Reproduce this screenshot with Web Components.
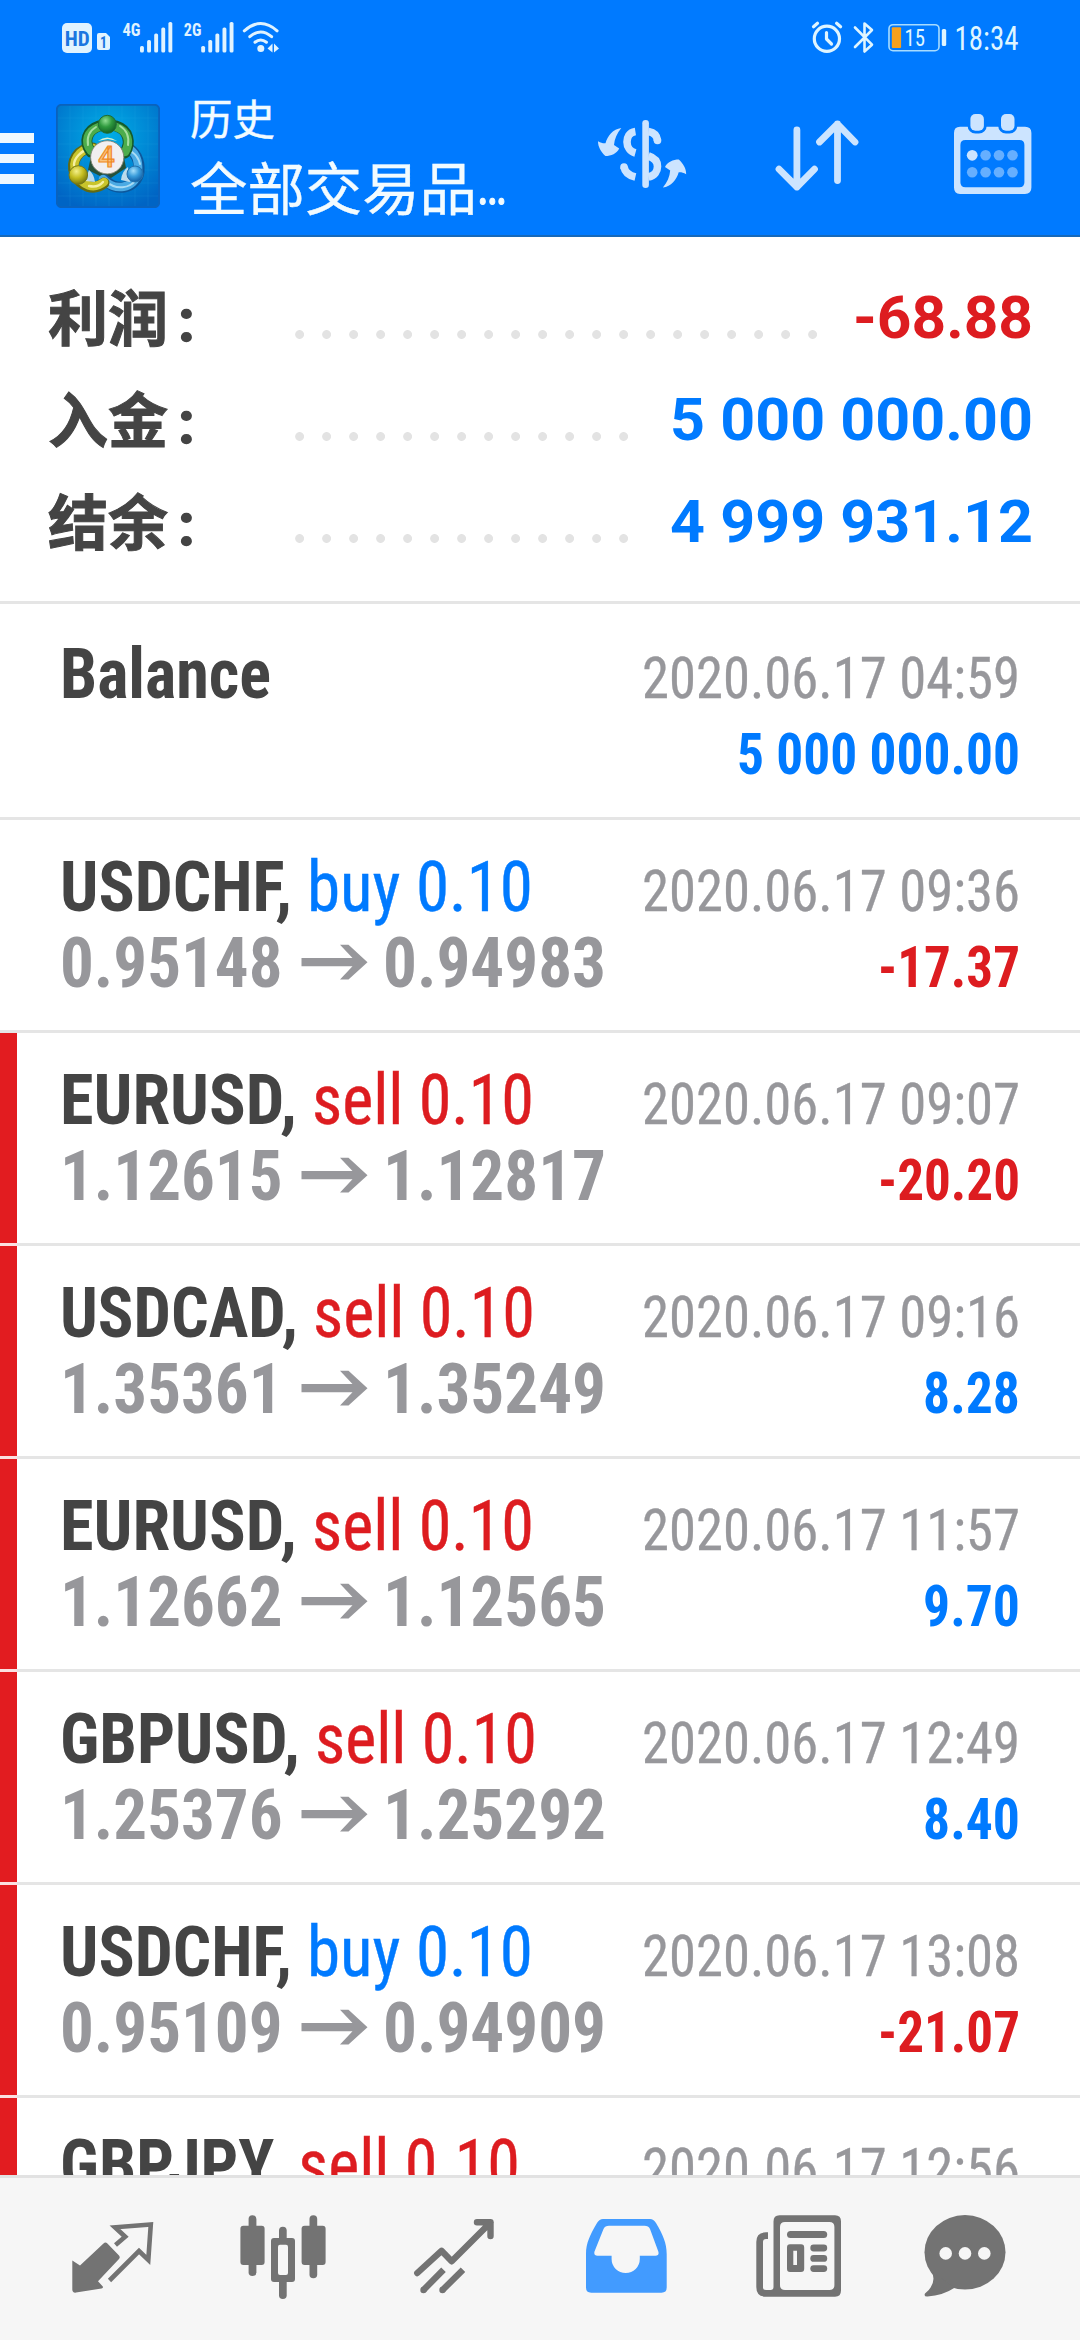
<!DOCTYPE html>
<html lang="zh-CN">
<head>
<meta charset="utf-8">
<title>历史</title>
<style>
html,body{margin:0;padding:0;width:1080px;height:2340px;overflow:hidden;background:#fff}
body{font-family:"Roboto Condensed",Roboto,"Noto Sans CJK SC",sans-serif;color:#444}
</style>
</head>
<body>
<trade-app></trade-app>
<script>
// Single-line text squeezed horizontally to the width given in "w".
class FitText extends HTMLElement{
  connectedCallback(){
    const w=+this.getAttribute('w');
    const r=this.attachShadow({mode:'open'});
    r.innerHTML=`<style>:host{display:block;flex:none;width:${w}px;white-space:pre}
      span{display:inline-block;transform-origin:0 0}</style><span></span>`;
    const s=r.querySelector('span');
    s.textContent=this.getAttribute('text');
    const n=s.getBoundingClientRect().width;
    if(n)s.style.transform=`scaleX(${w/n})`;
  }
}
customElements.define('fit-text',FitText);

class StatusBar extends HTMLElement{
  connectedCallback(){
    const bars=x=>[46,40,33.5,27.5,22].map((y,i)=>`<rect x="${x+i*7.1}" y="${y}" width="3.9" height="${52.6-y}" rx="1.6"/>`).join('');
    this.attachShadow({mode:'open'}).innerHTML=`<style>
    :host{display:flex;justify-content:space-between;height:76px}
    svg{display:block}text{font-family:"Roboto Condensed",Roboto,sans-serif}</style>
    <svg width="300" height="76" fill="#e0f3ff">
      <rect x="62" y="23" width="30" height="30" rx="5"/>
      <text x="64.800" y="45.500" font-size="21" font-weight="700" fill="#1b76e0" textLength="25" lengthAdjust="spacingAndGlyphs">HD</text>
      <path d="M99 33h7l4 4v11q0 2-2 2h-9q-2 0-2-2V35q0-2 2-2z"/>
      <text x="100" y="48" font-size="17" font-weight="700" fill="#1b76e0" textLength="7" lengthAdjust="spacingAndGlyphs">1</text>
      <text x="122.5" y="35.6" font-size="19" font-weight="700" textLength="18" lengthAdjust="spacingAndGlyphs">4G</text>
      ${bars(140)}
      <text x="183.8" y="35.6" font-size="19" font-weight="700" textLength="17.6" lengthAdjust="spacingAndGlyphs">2G</text>
      ${bars(201.2)}
      <g fill="none" stroke="#e0f3ff" stroke-width="3" stroke-linecap="round"><path d="M244.3 30.8q16.400-14.500 32.800 0M249.800 36.700q11-9.500 21.800 0M255 42.200q5.700-4.500 11.400 0"/></g>
      <circle cx="260.800" cy="48.600" r="3.500"/>
      <path d="M272.500 43.500v9l-5-4zM274 43.500l5 5-5 4z"/>
    </svg>
    <svg width="280" height="76" viewBox="800 0 280 76" fill="#dff5ff">
      <g fill="none" stroke="#dff5ff" stroke-width="3.200" stroke-linecap="round" stroke-linejoin="round">
      <circle cx="826.900" cy="38.700" r="12.600"/><path d="M826.500 32.500v6.500l5 5M813.500 26.800l4-3.500M840.600 26.800l-4-3.500"/>
      <path stroke-width="2.600" d="M855 27.500L872 44.700 864.500 51.500V23.500L872 30 855 47"/></g>
      <rect x="889" y="24.700" width="50" height="26" rx="4" fill="none" stroke="#a8dcff" stroke-width="1.600"/>
      <rect x="891.800" y="27.300" width="9.300" height="20.700" rx="1" fill="#f7a01d"/>
      <text x="904.500" y="46" font-size="24.500" textLength="20.500" lengthAdjust="spacingAndGlyphs">15</text>
      <rect x="941.800" y="29" width="4.400" height="17" rx="1.500"/>
      <text x="954.500" y="50" font-size="33.500" textLength="64" lengthAdjust="spacingAndGlyphs">18:34</text>
    </svg>`;
  }
}
customElements.define('status-bar',StatusBar);

class AppLogo extends HTMLElement{
  connectedCallback(){
    this.attachShadow({mode:'open'}).innerHTML=`<style>:host{display:block;width:104px;height:104px}svg{display:block}</style>
    <svg width="104" height="104">
    <defs>
      <radialGradient id="b" cx=".5" cy=".3" r=".75"><stop offset="0" stop-color="#00aee6"/><stop offset=".5" stop-color="#008ad6"/><stop offset="1" stop-color="#0064c4"/></radialGradient>
      <radialGradient id="g" cx=".4" cy=".3" r=".7"><stop offset="0" stop-color="#8fdd92"/><stop offset=".5" stop-color="#2f9a3e"/><stop offset="1" stop-color="#136326"/></radialGradient>
      <radialGradient id="y" cx=".4" cy=".3" r=".7"><stop offset="0" stop-color="#f4f08a"/><stop offset=".5" stop-color="#c6bf22"/><stop offset="1" stop-color="#78780c"/></radialGradient>
      <radialGradient id="u" cx=".4" cy=".3" r=".7"><stop offset="0" stop-color="#a5defa"/><stop offset=".5" stop-color="#3a9ddb"/><stop offset="1" stop-color="#115fa5"/></radialGradient>
    </defs>
    <rect x=".8" y=".8" width="102.400" height="102.400" rx="5" fill="url(#b)" stroke="#0a62bd" stroke-width="2"/>
    <path d="M14 2v100M27 2v100M40 2v100M53 2v100M66 2v100M79 2v100M92 2v100M2 14h100M2 27h100M2 40h100M2 53h100M2 66h100M2 79h100M2 92h100" stroke="#3bb4f0" stroke-opacity=".12"/>
    <path d="M36 48L51 40 67 48 70 64 52 76 32 66z" fill="#24513a"/>
    <g fill="none" stroke-linecap="round">
      <path d="M49 76C60 88 80 85 83 68 84 56 79 47 71 44" stroke="#0d579b" stroke-width="11"/>
      <path d="M47 75C58 88 79 85 82 68 83 56 79 47 71 44" stroke="#4aaae4" stroke-width="8.500"/>
      <path d="M50 77C60 87 74 84 80 76M84 60Q82 52 76 48" stroke="#a9dcf5" stroke-width="2"/>
      <path d="M37 44C22 44 14 58 19 70 25 83 38 87 48 79" stroke="#626a12" stroke-width="11"/>
      <path d="M37 44C22 45 15 58 20 69 26 82 38 86 48 78" stroke="#c9c42b" stroke-width="8.500"/>
      <path d="M34 44C25 47 18 54 18 61M33 82Q42 84 47 78" stroke="#f5f0a2" stroke-width="2.400"/>
      <path d="M35 48C27 38 31 26 43 22M60 22C73 26 75 39 69 49" stroke="#155b2b" stroke-width="11"/>
      <path d="M35 47C28 38 31 27 43 23M60 23C72 27 75 38 69 48" stroke="#4cac4c" stroke-width="8.500"/>
      <path d="M32 41Q30 29 40 23M64 22Q74 28 72 41" stroke="#a6dfa0" stroke-width="2"/>
    </g>
    <path d="M42 37q9-7 19 0l-9-2z" fill="#d4f0d2"/>
    <path d="M33 66q5 4 6 12l-10-1zM72 63q-6 4-7 13l9 2z" fill="#dceaf0" opacity=".85"/>
    <circle cx="51.300" cy="20.300" r="9" fill="url(#g)" stroke="#206b36" stroke-width="1"/>
    <circle cx="22.300" cy="71" r="9.300" fill="url(#y)" stroke="#75781a" stroke-width="1"/>
    <circle cx="79" cy="70" r="8" fill="url(#u)" stroke="#2472ae" stroke-width="1"/>
    <circle cx="51.200" cy="53.300" r="16.600" fill="#f1eff0" stroke="#7d8270" stroke-width=".9"/>
    <text x="50.500" y="63.200" text-anchor="middle" font-family="Roboto,sans-serif" font-weight="500" font-size="29" fill="#f9c47e" stroke="#f08a24" stroke-width="1.200">4</text>
    </svg>`;
  }
}
customElements.define('app-logo',AppLogo);

class ToolBar extends HTMLElement{
  connectedCallback(){
    this.attachShadow({mode:'open'}).innerHTML=`<style>
    :host{display:flex;height:159px;color:#f2fbff}
    svg{display:block;flex:none}
    .menu{width:34px;display:flex;flex-direction:column;gap:11px;padding-top:57px;margin-right:22px}
    .menu i{height:9.500px;background:#eef8ff}
    app-logo{margin-top:28px}
    .titles{width:374px;padding-left:30px;padding-top:10px;box-sizing:border-box;font-family:"Noto Sans CJK SC",sans-serif;-webkit-text-stroke:.4px #f2fbff}
    .sub{font-size:42.500px;line-height:62px;height:62px}
    .main{font-size:57px;line-height:74px;display:flex}
    .dots{font-family:Roboto,sans-serif;-webkit-text-stroke:1.200px #f2fbff}
    </style>
    <div class="menu"><i></i><i></i><i></i></div>
    <app-logo></app-logo>
    <div class="titles"><div class="sub"><fit-text w="85" text="历史"></fit-text></div>
      <div class="main"><fit-text w="287" text="全部交易品"></fit-text><fit-text class="dots" w="30" text="…"></fit-text></div></div>
    <svg width="546" height="159" viewBox="534 76 546 159" fill="#cce4ff">
      <rect x="642.300" y="120" width="6.600" height="68" rx="3.300"/>
      <g fill="none" stroke="#cce4ff" stroke-width="7.600">
        <path d="M635.400 131.500C629 132.500 627 137.500 627 142 627 147 630 151.500 635.400 153M648.500 131.500C654 132.500 657 135.500 657.500 140.500M648.500 156C655 158 657.500 162 657.500 166.500S655 175.500 648.500 177M624 167C625 172.500 629 175.500 635.400 177"/></g>
      <circle cx="657.500" cy="140.500" r="3.800"/><circle cx="624" cy="167" r="3.800"/>
      <path d="M621.300 128C617 133 614.500 139 614 145L619.200 148.500C617 153.500 611 156 605.400 156 601 152 598 147 598 141.300 601 143 603 143.500 605.500 143.300 607.500 136 613 129 621.300 128z"/>
      <path transform="rotate(180 642.1 157.8)" d="M621.300 128C617 133 614.500 139 614 145L619.200 148.500C617 153.500 611 156 605.400 156 601 152 598 147 598 141.300 601 143 603 143.500 605.500 143.300 607.500 136 613 129 621.300 128z"/>
      <path fill="none" stroke="#cce4ff" stroke-width="6.800" stroke-linecap="round" stroke-linejoin="round" d="M796.900 130v57M779 169.200L796.900 187 814.500 169.200M837.500 180.500V124M819.500 142L837.500 124 855 142"/>
      <path fill-rule="evenodd" d="M960 126.700h65q6.400 0 6.400 6.400v54.500q0 6.400-6.400 6.400h-65q-6 0-6-6.400v-54.500q0-6.400 6-6.400zM965.400 140q-5 0-5 5v37.300q0 5 5 5h54q5 0 5-5V145q0-5-5-5z"/>
      <g stroke="#007aff" stroke-width="5.600" paint-order="stroke"><rect x="970.400" y="114" width="13.500" height="16.700" rx="5"/><rect x="1001" y="114" width="13.500" height="16.700" rx="5"/></g>
      <circle cx="972.200" cy="155.300" r="5.400"/>
      <g fill="#66afff"><circle cx="985.600" cy="155.300" r="5.300"/><circle cx="999" cy="155.300" r="5.300"/><circle cx="1012.500" cy="155.300" r="5.300"/>
      <circle cx="972.200" cy="172.300" r="5.300"/><circle cx="985.600" cy="172.300" r="5.300"/><circle cx="999" cy="172.300" r="5.300"/><circle cx="1012.500" cy="172.300" r="5.300"/></g>
    </svg>`;
  }
}
customElements.define('tool-bar',ToolBar);

class SummaryLine extends HTMLElement{
  connectedCallback(){
    const g=n=>this.getAttribute(n);
    this.attachShadow({mode:'open'}).innerHTML=`<style>
    :host{display:flex;height:102px;padding:0 47px 0 48px;font-weight:700;font-size:60px;line-height:102px}
    .l{width:120px;font-family:"Noto Sans CJK SC",sans-serif;margin-top:-3px;-webkit-text-stroke:1px #444}
    .c{width:127px;padding-left:10px;box-sizing:border-box;margin-top:3px;font-family:Roboto,sans-serif;-webkit-text-stroke:1.500px #444}
    .d{height:9px;margin-top:62.500px;width:${27*g('dots')}px;background:radial-gradient(circle at 4.600px 4.500px,#e3e3e3 4px,transparent 4.800px) 0 0/27px 9px repeat-x}
    .v{margin-left:auto;color:${g('color')};font-family:Roboto,sans-serif}
    </style><fit-text class="l" w="120" text="${g('label')}"></fit-text><span class="c">:</span><div class="d"></div><fit-text class="v" w="${g('w')}" text="${g('value')}"></fit-text>`;
  }
}
customElements.define('summary-line',SummaryLine);

class DealRow extends HTMLElement{
  connectedCallback(){
    const g=n=>this.getAttribute(n);
    const pos=g('value')[0]!=='-', side=g('side');
    this.attachShadow({mode:'open'}).innerHTML=`<style>
    :host{display:flex;flex:none;height:210px;border-bottom:3px solid #e5e5e5;position:relative;justify-content:space-between;box-sizing:content-box;line-height:76px}
    .bar{position:absolute;left:0;top:0;width:17px;height:210px;background:#e21c20}
    .bar::after{content:"";position:absolute;top:210px;left:0;width:17px;height:3px;background:#fbe0e0}
    .left{padding:29px 0 0 60px;font-size:70px;font-weight:700}
    .right{padding:34px 60px 0 0;font-size:57px;display:flex;flex-direction:column;align-items:flex-end}
    .line{display:flex}
    .side{font-weight:400;margin-left:15px;color:${side==='buy'?'#007aff':'#dd1c20'};-webkit-text-stroke:.4px}
    .price,.time{color:#97979b}
    svg{display:block;width:100px;height:76px;flex:none}
    .time{font-weight:400;-webkit-text-stroke:.3px}.val{font-weight:700;color:${pos?'#007aff':'#dd1c20'}}
    </style>${g('marked')!==null?'<div class="bar"></div>':''}
    <div class="left"><div class="line"><fit-text w="${g('nw')}" text="${g('name')}"></fit-text>${side?`<fit-text class="side" w="${side==='buy'?226:222}" text="${side} 0.10"></fit-text>`:''}</div>
    ${g('from')?`<div class="line price"><fit-text w="222.5" text="${g('from')}"></fit-text><svg viewBox="282.500 925 100 76" aria-label="→"><path d="M301 958h51l-12.500-13.300h8.500L367 962.200 348 979.500h-8.500L352 966.300H301z" fill="#97979b"/></svg><fit-text w="223" text="${g('to')}"></fit-text></div>`:''}</div>
    <div class="right"><fit-text class="time" w="378" text="2020.06.17 ${g('time')}"></fit-text><fit-text class="val" w="${g('vw')}" text="${g('value')}"></fit-text></div>`;
  }
}
customElements.define('deal-row',DealRow);

class NavIcon extends HTMLElement{
  connectedCallback(){
    const i=+this.getAttribute('index');
    const art=[
    `<path d="M72.300 2260.500L80 2265.500 103.500 2243.500Q105.400 2241.500 107.400 2243.500L119 2255.500Q120.500 2257.300 119 2259L98 2281.300 102.800 2286.500Q103.500 2288 101.500 2288.400L76 2292.600Q72.300 2293 72.300 2289.500z"/>
     <path fill="none" stroke="#737373" stroke-width="4.600" d="M115.500 2245L125.200 2236.700 115 2227.300 150.800 2224.500 148.300 2260 139 2251 109.500 2280.500"/>`,
    `<rect x="248.600" y="2215.300" width="7.800" height="60.700" rx="3.800"/><rect x="240.400" y="2225.700" width="24.200" height="39.300" rx="3"/>
     <rect x="309.500" y="2215.300" width="7.700" height="63" rx="3.800"/><rect x="301.600" y="2225.700" width="24" height="39.300" rx="3"/>
     <rect x="279" y="2226.700" width="7.700" height="72.300" rx="3.800"/><rect x="271" y="2238" width="24" height="44" rx="3"/><rect x="278" y="2244.700" width="10" height="30.300" rx="2" fill="#f6f6f6"/>`,
    `<g fill="none" stroke="#737373" stroke-width="6.400"><path stroke-linejoin="round" stroke-linecap="round" d="M417.300 2273L441.500 2250.800 451.700 2261.300 490.500 2222.500M477 2222.200H490.500V2236"/><path d="M423.500 2290L443.500 2269.700M442.500 2290L463 2269.700"/></g><circle cx="423.500" cy="2290" r="3.200"/><circle cx="442.500" cy="2290" r="3.200"/>`,
    `<path fill="#429bff" fill-rule="evenodd" d="M603 2219h47Q653.500 2219 656 2223C663 2235 666.700 2243 666.700 2254V2287.500Q666.700 2292.700 661.500 2292.700H591.200Q586 2292.700 586 2287.500V2254C586 2243 590 2235 597 2223Q599.500 2219 603 2219zM609 2225.700Q605 2225.700 603.500 2229L594.500 2251.500Q593.500 2255.700 597.500 2255.700H611.600V2259a14.100 14.100 0 0 0 28.200 0V2255.700H655.500Q659.500 2255.700 658.300 2251.500L650 2229Q648.500 2225.700 644.500 2225.700z"/>`,
    `<path fill-rule="evenodd" d="M779.500 2215.300H835Q841 2215.300 841 2221.500V2290.500Q841 2296.700 835 2296.700H766Q756.300 2296.700 756.300 2287V2242Q756.300 2232.300 766 2232.300H768V2239H766Q763 2239 763 2242V2287.500Q763 2290 766 2290H770.500Q773.500 2290 773.500 2287V2221.500Q773.500 2215.300 779.500 2215.300zM785 2222Q780 2222 780 2227V2285Q780 2290 785 2290H829.400Q834.400 2290 834.400 2285V2227Q834.400 2222 829.400 2222z"/>
     <rect x="787" y="2231" width="40.200" height="7" rx="3.500"/><path fill-rule="evenodd" d="M790 2244.300h11q3.200 0 3.200 3.200v21.200q0 3.300-3.200 3.300h-11q-3 0-3-3.300v-21.200q0-3.200 3-3.200zM793.300 2250.700V2265h3.700v-14.300z"/>
     <rect x="810.300" y="2244.600" width="16.900" height="6.800" rx="3.400"/><rect x="810.300" y="2255" width="16.900" height="6.800" rx="3.400"/><rect x="810.300" y="2265.200" width="16.900" height="6.800" rx="3.400"/>`,
    `<ellipse cx="965" cy="2252.300" rx="40.500" ry="37.200"/><path d="M932 2272Q937 2284 925 2293.500 923.500 2296.700 927.500 2296.500 943 2295.500 955 2287.500z"/><g fill="#f6f6f6"><circle cx="945.700" cy="2253.400" r="6.300"/><circle cx="965" cy="2253.400" r="6.300"/><circle cx="984.300" cy="2253.400" r="6.300"/></g>`][i];
    this.attachShadow({mode:'open'}).innerHTML=`<style>:host{display:block;width:171px;height:162px}svg{display:block}</style>
    <svg width="171" height="162" viewBox="${27+171*i} 2178 171 162" fill="#737373">${art}</svg>`;
  }
}
customElements.define('nav-icon',NavIcon);

class TradeApp extends HTMLElement{
  connectedCallback(){
    this.attachShadow({mode:'open'}).innerHTML=`<style>
    :host{display:flex;flex-direction:column;width:1080px;height:2340px}
    header{background:#007aff;border-bottom:2px solid #1769b9}
    .sum{padding-top:30px;box-sizing:border-box;height:367px;border-bottom:3px solid #e5e5e5}
    .sum summary-line{box-sizing:border-box}
    .list{padding-top:3px;height:1571px;box-sizing:border-box;overflow:hidden;display:flex;flex-direction:column}
    nav{display:flex;background:#f6f6f6;border-top:3px solid #e2e2e2;height:162px;padding:0 27px}
    header,section,nav{flex:none}
    </style>
    <header><status-bar></status-bar><tool-bar></tool-bar></header>
    <section class="sum">
      <summary-line label="利润" value="-68.88" color="#dd1c20" w="180" dots="20"></summary-line>
      <summary-line label="入金" value="5 000 000.00" color="#007aff" w="363" dots="13"></summary-line>
      <summary-line label="结余" value="4 999 931.12" color="#007aff" w="363" dots="13"></summary-line>
    </section>
    <section class="list">
      <deal-row name="Balance" nw="211" time="04:59" value="5 000 000.00" vw="283"></deal-row>
      <deal-row name="USDCHF," nw="232" side="buy" from="0.95148" to="0.94983" time="09:36" value="-17.37" vw="142"></deal-row>
      <deal-row marked name="EURUSD," nw="237" side="sell" from="1.12615" to="1.12817" time="09:07" value="-20.20" vw="142"></deal-row>
      <deal-row marked name="USDCAD," nw="238" side="sell" from="1.35361" to="1.35249" time="09:16" value="8.28" vw="97"></deal-row>
      <deal-row marked name="EURUSD," nw="237" side="sell" from="1.12662" to="1.12565" time="11:57" value="9.70" vw="97"></deal-row>
      <deal-row marked name="GBPUSD," nw="240" side="sell" from="1.25376" to="1.25292" time="12:49" value="8.40" vw="97"></deal-row>
      <deal-row marked name="USDCHF," nw="232" side="buy" from="0.95109" to="0.94909" time="13:08" value="-21.07" vw="142"></deal-row>
      <deal-row marked name="GBPJPY," nw="223" side="sell" time="12:56" value=""></deal-row>
    </section>
    <nav>${[0,1,2,3,4,5].map(i=>`<nav-icon index="${i}"></nav-icon>`).join('')}</nav>`;
  }
}
customElements.define('trade-app',TradeApp);
</script>
</body>
</html>
